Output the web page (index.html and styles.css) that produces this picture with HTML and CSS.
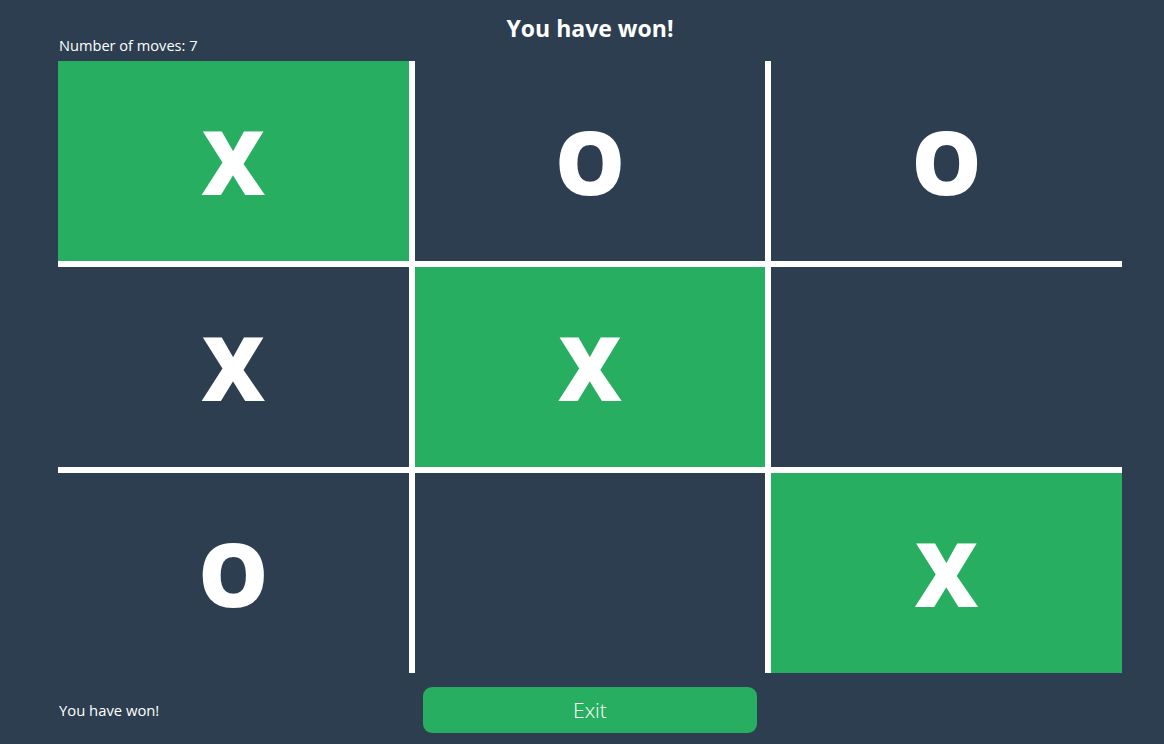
FILE: index.html
```html
<!DOCTYPE html>
<html lang="en">
<head>
<meta charset="utf-8">
<title>Tic Tac Toe</title>
<link rel="stylesheet" href="styles.css">
</head>
<body>
<main class="app">
  <header class="header">
    <h1 class="title">You have won!</h1>
    <div class="moves">Number of moves: 7</div>
  </header>
  <section class="board">
    <div class="cell win"><span class="mark x">X</span></div>
    <div class="cell"><span class="mark o">O</span></div>
    <div class="cell"><span class="mark o">O</span></div>
    <div class="cell"><span class="mark x">X</span></div>
    <div class="cell win"><span class="mark x">X</span></div>
    <div class="cell"></div>
    <div class="cell"><span class="mark o">O</span></div>
    <div class="cell"></div>
    <div class="cell win"><span class="mark x">X</span></div>
  </section>
  <footer class="footer">
    <div class="status">You have won!</div>
    <button class="exit" type="button">Exit</button>
  </footer>
</main>
</body>
</html>
```
FILE: styles.css
```css
* { box-sizing: border-box; }
html, body {
  margin: 0;
  height: 100%;
  background: #2c3e50;
}
body {
  font-family: "Open Sans", "Noto Sans", sans-serif;
  color: #ffffff;
  overflow: hidden;
}
.app {
  width: 1164px;
  height: 744px;
  padding: 0 42px 0 58px;
}
.header {
  display: flex;
  flex-direction: column;
}
.title {
  margin: 14px 0 0;
  font-size: 23px;
  font-weight: 700;
  line-height: 28px;
  text-align: center;
}
.moves {
  margin-top: -5px;
  padding-left: 1px;
  font-size: 14.6px;
  line-height: 16px;
}
.board {
  margin-top: 8px;
  display: grid;
  grid-template-columns: repeat(3, 1fr);
  grid-template-rows: repeat(3, 200px);
  gap: 6px;
  background: #ffffff;
}
.cell {
  background: #2c3e50;
  display: flex;
  align-items: center;
  justify-content: center;
}
.cell.win { background: #27ae60; }
.mark {
  font-size: 88px;
  font-weight: 800;
  line-height: 1;
  color: #ffffff;
}
.footer {
  margin-top: 14px;
  display: grid;
  grid-template-columns: repeat(3, 1fr);
  gap: 6px;
  align-items: center;
}
.status {
  padding-left: 1px;
  font-size: 14.8px;
  line-height: 18px;
}
.exit {
  margin: 0 8px;
  height: 46px;
  border: none;
  border-radius: 9px;
  background: #27ae60;
  color: #ffffff;
  font-family: "Open Sans", "Noto Sans", sans-serif;
  font-size: 21px;
  font-weight: 300;
  cursor: pointer;
}
```
